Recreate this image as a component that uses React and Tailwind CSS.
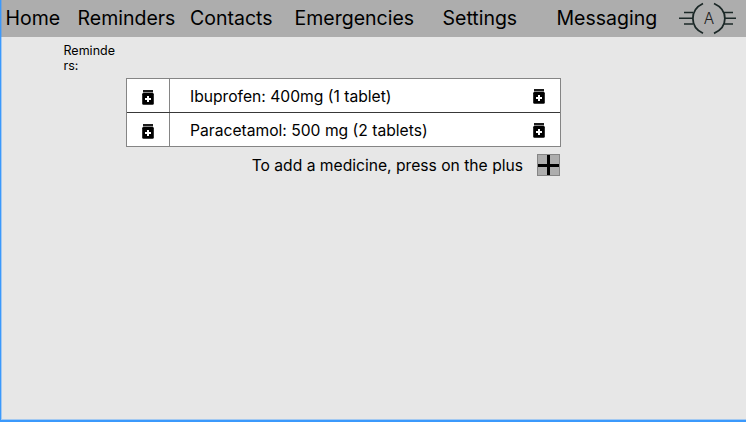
import React from "react";

const NAV_ITEMS = ["Home", "Reminders", "Contacts", "Emergencies", "Settings", "Messaging"];

const MEDICINES = ["Ibuprofen: 400mg (1 tablet)", "Paracetamol: 500 mg (2 tablets)"];

function Logo() {
  return (
    <svg className="block h-[37px] w-[60px]" viewBox="0 0 60 37" fill="none" stroke="#1b2827" strokeWidth="1.5">
      <path d="M24 3.5C10.5 10 10.5 27 24 33.3M35 3.5C49.5 10 49.5 27 35 33.3" strokeWidth="1.8" />
      <path d="M5 12.4h9M0 18.2h13M5 24h9M45 12.4h9M46 18.2h11M45 24h9" />
      <text
        x="30"
        y="23.6"
        textAnchor="middle"
        fontSize="15.5"
        fill="#202020"
        stroke="none"
        className="font-['Inter',sans-serif] font-light"
      >
        A
      </text>
    </svg>
  );
}

function MedicineIcon() {
  return (
    <svg className="block h-[15px] w-3" viewBox="0 0 12 15">
      <path d="M1 0h10v2.5H1z" fill="#1c1c1c" />
      <rect x="0.2" y="3" width="11.6" height="11.8" rx="1.3" fill="#000" />
      <path d="M5 6h2v2h2v2H7v2H5v-2H3V8h2z" fill="#fff" />
    </svg>
  );
}

function MedicineRow({ label }) {
  return (
    <div className="box-content flex h-[33px] items-start">
      <div className="flex h-full w-[43px] justify-center border-r border-[#858585] pt-[11px]">
        <MedicineIcon />
      </div>
      <span className="flex-1 pl-5 leading-[35px]">{label}</span>
      <div className="pr-[15px] pt-[10px]">
        <MedicineIcon />
      </div>
    </div>
  );
}

export default function App() {
  return (
    <div className="flex h-[422px] w-[746px] flex-col overflow-hidden border-b-2 border-l border-[#3b99fc] bg-[#e7e7e7] font-['Inter',sans-serif] text-black">
      <nav className="grid h-[37px] shrink-0 grid-cols-[72px_112.5px_104.5px_148px_114px_122.5px_60px] items-center border-l border-[#7ea5d0] bg-[#adadad] pl-[3.5px] text-[19.5px] leading-[36px]">
        {NAV_ITEMS.map((item) => (
          <a key={item} className="whitespace-nowrap pb-px">
            {item}
          </a>
        ))}
        <Logo />
      </nav>
      <main className="flex flex-1 border-b border-l border-[#a3c9f1]">
        <h1 className="ml-[61.5px] mt-[6px] w-[62.5px] text-[12.5px] leading-[15.4px]">
          Reminde
          <br />
          rs:
        </h1>
        <section className="mt-[41px] w-[435px] text-[15.65px] whitespace-nowrap">
          <div className="divide-y divide-[#383838] border border-[#858585] bg-white">
            {MEDICINES.map((medicine) => (
              <MedicineRow key={medicine} label={medicine} />
            ))}
          </div>
          <div className="mt-[7px] flex items-start justify-end gap-[14px] pr-px">
            <span className="leading-[24px]">To add a medicine, press on the plus</span>
            <button className="block h-[22px] w-[23px] border border-[#858585] bg-[#adadad]">
              <svg className="block h-5 w-[21px]" viewBox="0 0 21 20" stroke="#000" strokeWidth="3">
                <path d="M10.5 0v20M0 10.5h21" />
              </svg>
            </button>
          </div>
        </section>
      </main>
    </div>
  );
}
